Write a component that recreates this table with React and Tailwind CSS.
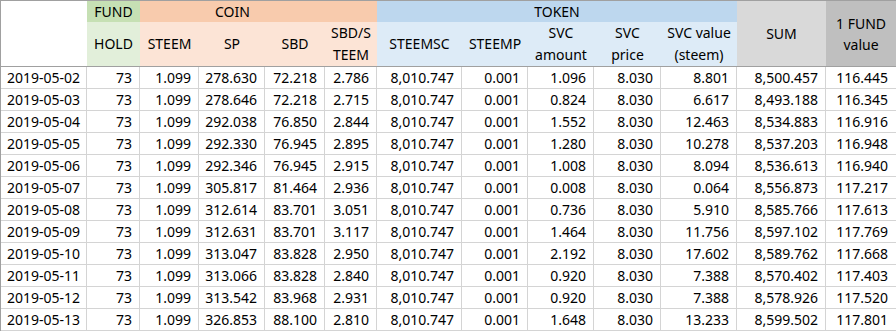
import React from "react";

const rows = [
  ["2019-05-02","73","1.099","278.630","72.218","2.786","8,010.747","0.001","1.096","8.030","8.801","8,500.457","116.445"],
  ["2019-05-03","73","1.099","278.646","72.218","2.715","8,010.747","0.001","0.824","8.030","6.617","8,493.188","116.345"],
  ["2019-05-04","73","1.099","292.038","76.850","2.844","8,010.747","0.001","1.552","8.030","12.463","8,534.883","116.916"],
  ["2019-05-05","73","1.099","292.330","76.945","2.895","8,010.747","0.001","1.280","8.030","10.278","8,537.203","116.948"],
  ["2019-05-06","73","1.099","292.346","76.945","2.915","8,010.747","0.001","1.008","8.030","8.094","8,536.613","116.940"],
  ["2019-05-07","73","1.099","305.817","81.464","2.936","8,010.747","0.001","0.008","8.030","0.064","8,556.873","117.217"],
  ["2019-05-08","73","1.099","312.614","83.701","3.051","8,010.747","0.001","0.736","8.030","5.910","8,585.766","117.613"],
  ["2019-05-09","73","1.099","312.631","83.701","3.117","8,010.747","0.001","1.464","8.030","11.756","8,597.102","117.769"],
  ["2019-05-10","73","1.099","313.047","83.828","2.950","8,010.747","0.001","2.192","8.030","17.602","8,589.762","117.668"],
  ["2019-05-11","73","1.099","313.066","83.828","2.840","8,010.747","0.001","0.920","8.030","7.388","8,570.402","117.403"],
  ["2019-05-12","73","1.099","313.542","83.968","2.931","8,010.747","0.001","0.920","8.030","7.388","8,578.926","117.520"],
  ["2019-05-13","73","1.099","326.853","88.100","2.810","8,010.747","0.001","1.648","8.030","13.233","8,599.502","117.801"],
];

const sub = "bg-[#fce4d6]";
const tok = "bg-[#ddebf7]";
const h2 = "flex items-center justify-center text-center leading-[22px] border-b border-[#a0a0a0]";

export default function App() {
  return (
    <div
      className="w-[896px] h-[331px] overflow-hidden bg-white text-black text-[14px]"
      style={{ fontFamily: '"Noto Sans", "Open Sans", sans-serif' }}
    >
      <div className="grid grid-cols-[86px_53px_59px_66px_60px_52px_85px_66px_66px_67px_76px_89px_70px] grid-rows-[21px_45px_repeat(12,22px)] border-t border-l border-[#a0a0a0]">
        {/* header row 1 */}
        <div className="row-span-2 border-b border-[#a0a0a0] bg-white" />
        <div className="bg-[#c6e0b4] flex items-center justify-center leading-[21px]">FUND</div>
        <div className="col-span-3 bg-[#f8cbad] flex items-center justify-center leading-[21px]">COIN</div>
        <div className="bg-[#f8cbad]" />
        <div className="col-span-5 bg-[#bdd7ee] flex items-center justify-center leading-[21px]">TOKEN</div>
        <div className="row-span-2 bg-[#d9d9d9] flex items-center justify-center border-b border-[#a0a0a0]">SUM</div>
        <div className="row-span-2 bg-[#bfbfbf] flex items-center justify-center text-center leading-[21px] border-b border-[#a0a0a0]">
          1 FUND<br />value
        </div>
        {/* header row 2 */}
        <div className={`${h2} bg-[#e2efda]`}>HOLD</div>
        <div className={`${h2} ${sub}`}>STEEM</div>
        <div className={`${h2} ${sub}`}>SP</div>
        <div className={`${h2} ${sub}`}>SBD</div>
        <div className={`${h2} ${sub}`}>SBD/S<br />TEEM</div>
        <div className={`${h2} ${tok}`}>STEEMSC</div>
        <div className={`${h2} ${tok}`}>STEEMP</div>
        <div className={`${h2} ${tok}`}>SVC<br />amount</div>
        <div className={`${h2} ${tok}`}>SVC<br />price</div>
        <div className={`${h2} ${tok}`}>SVC value<br />(steem)</div>
        {/* data */}
        {rows.map((r, i) =>
          r.map((c, j) => (
            <div
              key={i + "-" + j}
              className={
                j === 0
                  ? "border-r border-b border-[#d4d4d4] pl-[6px] leading-[21px] whitespace-nowrap"
                  : j === 12
                  ? "border-b border-[#d4d4d4] pr-[8px] text-right leading-[21px] whitespace-nowrap"
                  : "border-r border-b border-[#d4d4d4] pr-[7px] text-right leading-[21px] whitespace-nowrap"
              }
            >
              {c}
            </div>
          ))
        )}
      </div>
    </div>
  );
}
